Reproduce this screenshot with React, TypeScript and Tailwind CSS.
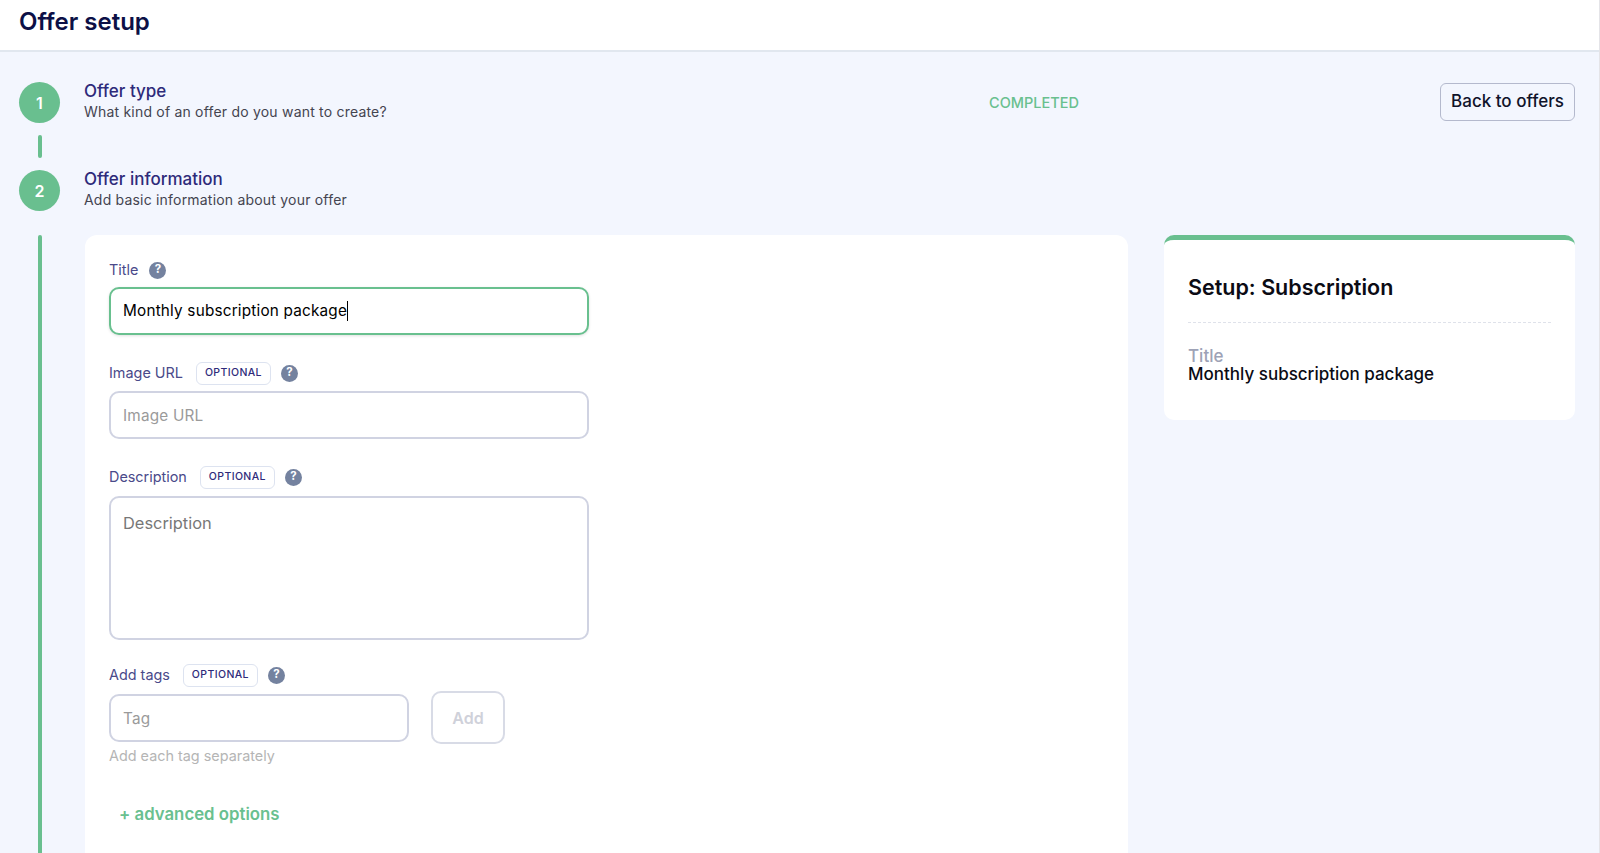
import React from 'react';

const font = { fontFamily: 'Inter, "Noto Sans", sans-serif' };

const HelpIcon: React.FC = () => (
  <span className="flex h-[17px] w-[17px] items-center justify-center rounded-full bg-[#74829f] text-[11.5px] font-bold leading-none text-white">
    ?
  </span>
);

const OptionalBadge: React.FC = () => (
  <span className="flex h-[23px] w-[75px] items-center justify-center rounded-[6px] border border-[#dde3f0] bg-white text-[10.5px] font-medium tracking-[0.4px] text-[#2e2a7a]">
    OPTIONAL
  </span>
);

interface FieldLabelProps {
  text: string;
  optional?: boolean;
}

const FieldLabel: React.FC<FieldLabelProps> = ({ text, optional }) => (
  <div className="flex h-[24px] items-center">
    <span className="text-[14.4px] text-[#4a4a8a]">{text}</span>
    {optional ? (
      <span className="ml-[13px] mr-[-1px]">
        <OptionalBadge />
      </span>
    ) : null}
    <span className="ml-[11px]">
      <HelpIcon />
    </span>
  </div>
);

const inputClass =
  'block h-[48px] rounded-[10px] border-2 border-[#d0d3e2] bg-white px-[12px] text-[15.3px] tracking-[0.2px] text-black outline-none placeholder:text-[#9a9a9a]';

interface StepHeadProps {
  num: number;
  title: string;
  sub: string;
  children?: React.ReactNode;
}

const StepHead: React.FC<StepHeadProps> = ({ num, title, sub, children }) => (
  <div className="flex h-[41px] items-center">
    <div className="flex h-[41px] w-[41px] shrink-0 items-center justify-center rounded-full bg-[#69bf8f] text-[16px] font-semibold text-white">
      {num}
    </div>
    <div className="ml-[24px] -mt-[3px] w-[905px] shrink-0">
      <div className="text-[17px] font-medium leading-[20px] text-[#2e2a7a]">{title}</div>
      <div className="mt-[1px] text-[14px] leading-[20px] tracking-[0.2px] text-[#444450]">{sub}</div>
    </div>
    {children}
  </div>
);

export default function App() {
  return (
    <div className="flex h-screen flex-col overflow-hidden border-r border-[#e4e4e8] bg-[#f3f6fe]" style={font}>
      <header className="flex h-[52px] shrink-0 items-center border-b-2 border-[#e1e7ef] bg-white pb-[6px] pl-[19px]">
        <h1 className="text-[24px] font-semibold text-[#0c1046]">Offer setup</h1>
      </header>

      <main className="flex min-h-0 flex-1 flex-col pl-[19px] pr-[24px] pt-[30px]">
        <StepHead num={1} title="Offer type" sub="What kind of an offer do you want to create?">
          <span className="text-[14.5px] font-medium text-[#69c08f]">COMPLETED</span>
          <button className="ml-auto mb-[1px] h-[38px] w-[135px] rounded-[6px] border border-[#b4b9cd] text-[17px] font-medium text-[#10132a]">
            Back to offers
          </button>
        </StepHead>

        <div className="mb-[12px] ml-[19px] mt-[12px] h-[23px] w-[4px] rounded-full bg-[#69bf8f]" />

        <StepHead num={2} title="Offer information" sub="Add basic information about your offer" />

        <div className="mt-[24px] flex min-h-0 flex-1">
          <div className="ml-[19px] w-[4px] shrink-0 rounded-t-full bg-[#69bf8f]" />

          <section className="ml-[43px] w-[1043px] shrink-0 rounded-t-[12px] bg-white pl-[24px] pt-[23px]">
            <FieldLabel text="Title" />
            <div className="mt-[5px] flex h-[48px] w-[480px] items-center rounded-[10px] border-2 border-[#69c08f] bg-white pl-[12px] text-[15.3px] tracking-[0.2px] text-black shadow-[0_1px_3px_rgba(0,0,0,0.12)]">
              Monthly subscription package
              <span className="h-[20px] w-px bg-black" />
            </div>

            <div className="mt-[26px]">
              <FieldLabel text="Image URL" optional />
            </div>
            <input className={`${inputClass} mt-[6px] w-[480px]`} placeholder="Image URL" readOnly />

            <div className="mt-[26px]">
              <FieldLabel text="Description" optional />
            </div>
            <textarea
              className="mt-[7px] block h-[144px] w-[480px] resize-none rounded-[10px] border-2 border-[#d0d3e2] bg-white px-[12px] py-[14px] text-[16.4px] leading-[22px] outline-none placeholder:text-[#777]"
              placeholder="Description"
              readOnly
            />

            <div className="mt-[23px]">
              <FieldLabel text="Add tags" optional />
            </div>
            <div className="mt-[4px] flex items-start">
              <input className={`${inputClass} mt-[3px] w-[300px]`} placeholder="Tag" readOnly />
              <button className="ml-[22px] h-[53px] w-[74px] rounded-[10px] border-2 border-[#d8dbe6] text-[16px] font-semibold text-[#cfd1da]">
                Add
              </button>
            </div>
            <div className="mt-[2px] text-[14.4px] leading-[20px] text-[#b5b5b5]">Add each tag separately</div>

            <div className="mt-[38px] pl-[10px] text-[16.8px] font-semibold leading-[20px] text-[#69c08f]">
              + advanced options
            </div>
          </section>

          <aside className="ml-[36px] h-[185px] w-[411px] shrink-0 rounded-[10px] border-t-[5px] border-[#69bf8f] bg-white pl-[24px] pt-[32px]">
            <h2 className="text-[21.5px] font-semibold leading-[30px] text-[#0b0b14]">Setup: Subscription</h2>
            <div className="mt-[20px] w-[363px] border-t border-dashed border-[#dfe2ea]" />
            <div className="mt-[25px] text-[17px] font-medium leading-[16px] text-[#9da2b6]">Title</div>
            <div className="text-[17px] font-medium leading-[20px] text-[#0b0b14]">Monthly subscription package</div>
          </aside>
        </div>
      </main>
    </div>
  );
}
